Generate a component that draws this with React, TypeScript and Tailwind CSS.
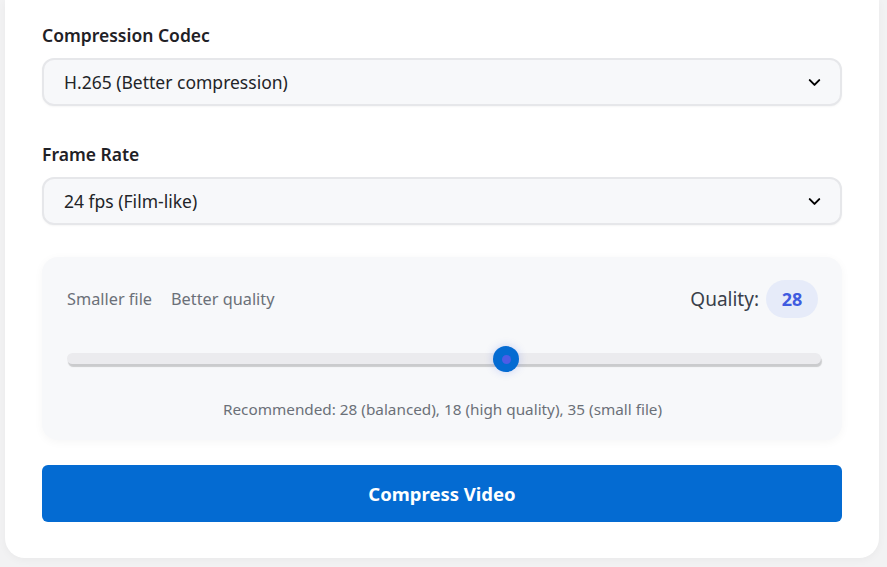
import { ChevronDown } from 'lucide-react';

const MIN = 18;
const MAX = 35;

function SelectBox({ value }: { value: string }) {
  return (
    <div className="flex h-[48px] items-center justify-between rounded-[12px] border-2 border-[#e6e7ea] bg-[#f7f8fa] pl-[20px] pr-[16px] shadow-[0_1px_2px_rgba(0,0,0,0.04)]">
      <span className="text-[17.5px] text-[#222428]">{value}</span>
      <ChevronDown className="h-[19px] w-[19px] text-black" strokeWidth={2.5} />
    </div>
  );
}

export default function App() {
  const quality = 28;
  const pct = (quality - MIN) / (MAX - MIN);

  return (
    <div className="min-h-screen bg-[#f2f2f3] pl-[5px] pr-[8px] pb-[9px]" style={{ fontFamily: '"Noto Sans", "Open Sans", sans-serif' }}>
      <div className="rounded-b-[20px] bg-white px-[37px] pt-[22px] pb-[36px] shadow-[0_2px_8px_rgba(0,0,0,0.04)]">
        {/* Codec */}
        <label className="mb-[10px] block text-[17.5px] font-semibold leading-[26px] text-[#1f2126]">Compression Codec</label>
        <SelectBox value="H.265 (Better compression)" />

        {/* Frame rate */}
        <label className="mt-[35px] mb-[10px] block text-[17.5px] font-semibold leading-[26px] text-[#1f2126]">Frame Rate</label>
        <SelectBox value="24 fps (Film-like)" />

        {/* Quality panel */}
        <div className="mt-[32px] h-[183px] rounded-[16px] bg-[#f7f8fa] pt-[23px] pl-[25px] pr-[24px] shadow-[0_2px_10px_rgba(0,0,0,0.04)]">
          <div className="flex h-[38px] items-center justify-between">
            <div className="flex gap-[19px] text-[16.3px] text-[#6b7078]">
              <span>Smaller file</span>
              <span>Better quality</span>
            </div>
            <div className="flex items-center gap-[7px]">
              <span className="text-[19px] text-[#3a3f4a]">Quality:</span>
              <span className="flex h-[38px] w-[52px] items-center justify-center rounded-full bg-[#e6ebf9] text-[18px] font-bold text-[#3f5be0]">
                {quality}
              </span>
            </div>
          </div>

          {/* Slider */}
          <div className="relative mt-[28px] h-[26px]">
            <div className="absolute top-[7px] left-0 right-[-3px] h-[11px] rounded-full bg-[#ebebee] shadow-[1px_3px_1px_rgba(0,0,0,0.18)]" />
            <div
              className="absolute top-0 flex h-[26px] w-[26px] items-center justify-center rounded-full bg-[#046bd2] shadow-[0_0_8px_rgba(60,90,230,0.25)]"
              style={{ left: `calc((100% - 26px) * ${pct})` }}
            >
              <div className="h-[9px] w-[9px] rounded-full bg-[#4d5ce6]" />
            </div>
          </div>

          <p className="mt-[26px] text-center text-[15.3px] text-[#6b7078]">
            Recommended: 28 (balanced), 18 (high quality), 35 (small file)
          </p>
        </div>

        {/* Submit */}
        <button className="mt-[25px] flex h-[57px] w-full items-center justify-center rounded-[6px] bg-[#046bd2] text-[18.5px] font-bold text-white">
          Compress Video
        </button>
      </div>
    </div>
  );
}
